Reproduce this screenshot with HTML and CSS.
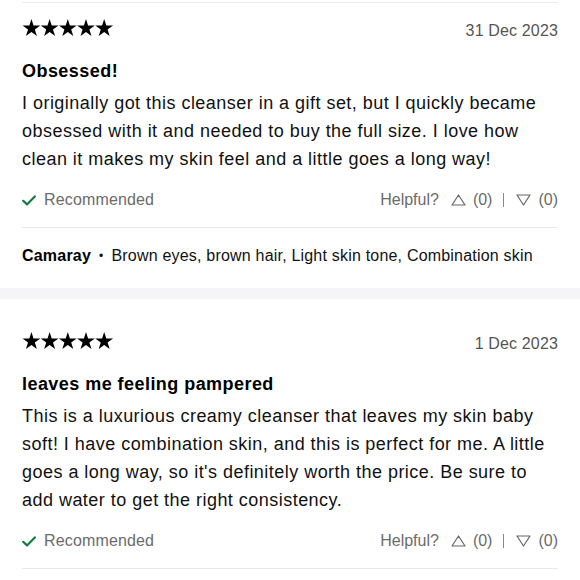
FILE: index.html
```html
<!DOCTYPE html>
<html lang="en">
<head>
<meta charset="utf-8">
<title>Reviews</title>
<link rel="stylesheet" href="styles.css">
</head>
<body>
<div class="top-rule"></div>

<article class="review">
  <div class="review-head">
    <svg class="stars" width="92" height="17" viewBox="0 0 92 17.2" aria-label="5 stars">
      <defs>
        <polygon id="star" points="9,0 11.12,6.54 18,6.54 12.43,10.58 14.56,17.11 9,13.07 3.44,17.11 5.57,10.58 0,6.54 6.88,6.54"/>
      </defs>
      <use href="#star" x="0"/>
      <use href="#star" x="18.4"/>
      <use href="#star" x="36.8"/>
      <use href="#star" x="55.2"/>
      <use href="#star" x="73.6"/>
    </svg>
    <span class="date">31 Dec 2023</span>
  </div>
  <h3 class="title">Obsessed!</h3>
  <p class="body">I originally got this cleanser in a gift set, but I quickly became obsessed with it and needed to buy the full size. I love how clean it makes my skin feel and a little goes a long way!</p>
  <div class="review-foot">
    <span class="rec">
      <svg class="check" width="14" height="11" viewBox="0 0 14 11"><path d="M1.2 5.8 L5 9.4 L12.8 1.4" fill="none" stroke="#167a45" stroke-width="2.2" stroke-linecap="round" stroke-linejoin="round"/></svg>
      Recommended
    </span>
    <span class="helpful">
      <span class="label">Helpful?</span>
      <svg class="tri" width="15" height="12" viewBox="0 0 15 12"><path d="M7.5 1 L14 11 L1 11 Z" fill="none" stroke="#666" stroke-width="1.2" stroke-linejoin="round"/></svg>
      <span class="count">(0)</span>
      <span class="sep"></span>
      <svg class="tri" width="15" height="12" viewBox="0 0 15 12"><path d="M1 1 L14 1 L7.5 11 Z" fill="none" stroke="#666" stroke-width="1.2" stroke-linejoin="round"/></svg>
      <span class="count">(0)</span>
    </span>
  </div>
  <div class="rule"></div>
  <p class="author"><strong>Camaray</strong><span class="dot">•</span>Brown eyes, brown hair, Light skin tone, Combination skin</p>
</article>

<div class="band"></div>

<article class="review second">
  <div class="review-head">
    <svg class="stars" width="92" height="17" viewBox="0 0 92 17.2" aria-label="5 stars">
      <use href="#star" x="0"/>
      <use href="#star" x="18.4"/>
      <use href="#star" x="36.8"/>
      <use href="#star" x="55.2"/>
      <use href="#star" x="73.6"/>
    </svg>
    <span class="date">1 Dec 2023</span>
  </div>
  <h3 class="title">leaves me feeling pampered</h3>
  <p class="body">This is a luxurious creamy cleanser that leaves my skin baby soft! I have combination skin, and this is perfect for me. A little goes a long way, so it's definitely worth the price. Be sure to add water to get the right consistency.</p>
  <div class="review-foot">
    <span class="rec">
      <svg class="check" width="14" height="11" viewBox="0 0 14 11"><path d="M1.2 5.8 L5 9.4 L12.8 1.4" fill="none" stroke="#167a45" stroke-width="2.2" stroke-linecap="round" stroke-linejoin="round"/></svg>
      Recommended
    </span>
    <span class="helpful">
      <span class="label">Helpful?</span>
      <svg class="tri" width="15" height="12" viewBox="0 0 15 12"><path d="M7.5 1 L14 11 L1 11 Z" fill="none" stroke="#666" stroke-width="1.2" stroke-linejoin="round"/></svg>
      <span class="count">(0)</span>
      <span class="sep"></span>
      <svg class="tri" width="15" height="12" viewBox="0 0 15 12"><path d="M1 1 L14 1 L7.5 11 Z" fill="none" stroke="#666" stroke-width="1.2" stroke-linejoin="round"/></svg>
      <span class="count">(0)</span>
    </span>
  </div>
  <div class="rule"></div>
</article>
</body>
</html>
```

FILE: styles.css
```css
* { box-sizing: border-box; }
html, body { margin: 0; padding: 0; background: #fff; }
body {
  font-family: "Liberation Sans", Arial, Helvetica, sans-serif;
  color: #111;
  width: 580px;
  overflow: hidden;
}
.top-rule {
  height: 1px;
  background: #ebebeb;
  margin: 2px 22px 0;
}
.review { padding: 16px 22px 0; }
.review.second { padding-top: 33px; }
.review-head {
  display: flex;
  justify-content: space-between;
  align-items: baseline;
}
.stars { display: block; fill: #000; }
.date {
  font-size: 16px;
  line-height: 16px;
  letter-spacing: 0.15px;
  color: #555;
}
.title {
  margin: 20px 0 0;
  font-size: 18px;
  line-height: 24px;
  font-weight: 700;
  letter-spacing: 0.45px;
  color: #000;
}
.body {
  margin: 6px 0 0;
  font-size: 18px;
  line-height: 28px;
  letter-spacing: 0.47px;
  color: #111;
}
.review-foot {
  margin-top: 17px;
  display: flex;
  justify-content: space-between;
  align-items: center;
  font-size: 16px;
  line-height: 20px;
  color: #6b6b6b;
}
.rec { display: flex; align-items: center; gap: 8px; letter-spacing: 0.15px; }
.check { display: block; }
.helpful { display: flex; align-items: center; }
.tri { display: block; margin: 0 7px 0 12px; }
.sep {
  width: 1px;
  height: 14px;
  background: #888;
  margin: 0 0 0 11px;
}
.rule {
  height: 1px;
  background: #e8e8e8;
  margin-top: 17px;
}
.author {
  margin: 18px 0 0;
  font-size: 16px;
  line-height: 20px;
  letter-spacing: 0.2px;
  color: #111;
}
.author strong { font-weight: 700; color: #000; }
.dot { margin: 0 8px; font-size: 12px; vertical-align: 1px; }
.band {
  height: 11px;
  background: #f5f5f7;
  margin-top: 22px;
}
```
